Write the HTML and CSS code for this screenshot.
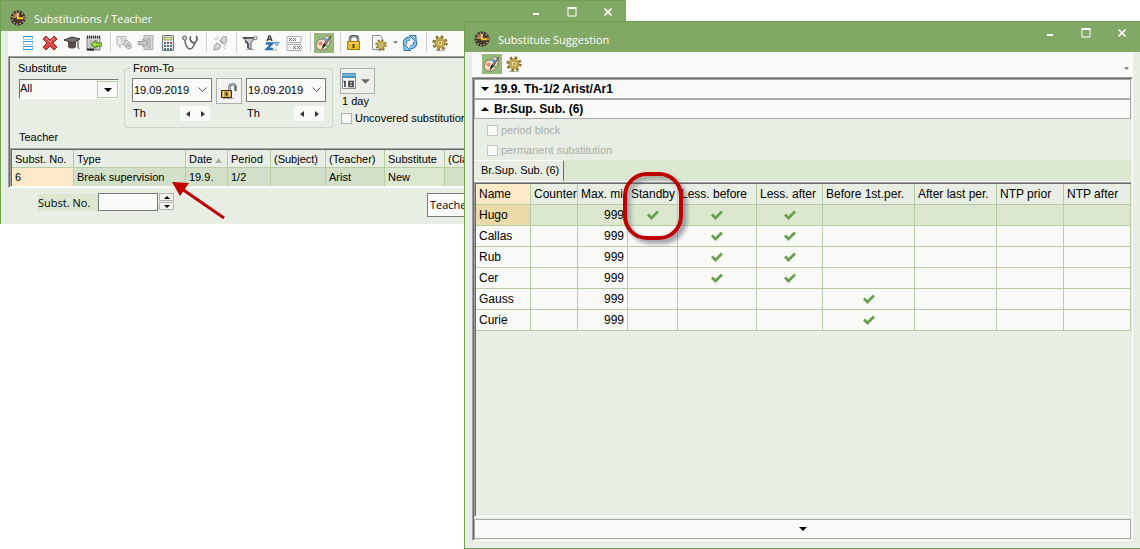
FILE: index.html
```html
<!DOCTYPE html>
<html lang="en">
<head>
    <meta charset="UTF-8">
    <meta name="viewport" content="width=device-width, initial-scale=1.0">
    <title>Substitutions / Teacher</title>
    <link rel="stylesheet" href="styles.css">
</head>
<body>
    <svg class="symbols" aria-hidden="true">
        <symbol id="clock" viewBox="0 0 16 16">
            <circle cx="8" cy="8" r="7.5" fill="#2c2725"/>
            <circle cx="8" cy="8" r="6.2" fill="#4b3a2c" stroke="#c9b69c" stroke-width="1.4" stroke-dasharray="1.4 1.85"/>
            <path d="M3 8a5 5 0 0 1 5-5v5z" fill="#b98752"/>
            <path d="M8 3v5" stroke="#f6e3b4" stroke-width="1.5"/>
            <path d="M7 8.2h6" stroke="#ffc60b" stroke-width="2"/>
        </symbol>
        <symbol id="palette" viewBox="0 0 16 16">
            <path d="M4 4c2 0 2 1 3.500 0C8 1 11 0 13 2c2 2 1 7-1 10-2 3-7 4-10 2-3-2-2-8 2-10z" fill="#f1dfc6" stroke="#8a765f"/>
            <circle cx="4.500" cy="8.500" r="2" fill="#e48080"/>
            <circle cx="9.500" cy="4.500" r="1.700" fill="#6c9fda"/>
            <circle cx="5.500" cy="12" r="1" fill="#f4ece0"/>
            <circle cx="11.500" cy="11" r="1.500" fill="#78b070"/>
            <path d="M15 1L9 11l-3 3 1-4 6-7z" fill="#2b2b2b" stroke="#2b2b2b" stroke-width=".6"/>
            <path d="M13 3l-4 6" stroke="#9ba6b0"/>
        </symbol>
        <symbol id="gear" viewBox="0 0 16 16">
            <path d="M3 15.500h10" stroke="#b5b5b0"/>
            <circle cx="8" cy="8" r="6.300" fill="none" stroke="#8d7128" stroke-width="2.800" stroke-dasharray="2.400 2.550"/>
            <circle cx="8" cy="8" r="5" fill="#d9bf62" stroke="#98792b"/>
            <circle cx="8" cy="8" r="3" fill="#efdf9e" stroke="#a98a38"/>
            <circle cx="8" cy="8" r="1" fill="#8b6914"/>
        </symbol>
        <symbol id="check" viewBox="0 0 12 10">
            <path d="M1 4.500l3.500 3.500L11 1.500" fill="none" stroke="#69a04e" stroke-width="2.800"/>
        </symbol>
        <symbol id="chevron" viewBox="0 0 9 6">
            <path d="M.5 .5l4 4 4-4" fill="none" stroke="#555"/>
        </symbol>
        <symbol id="down" viewBox="0 0 8 4">
            <path d="M0 0h8L4 4z" fill="currentColor"/>
        </symbol>
        <symbol id="padlock-open" viewBox="0 0 16 16">
            <path d="M8.500 8V4c0-3.500 6-3.500 6 0v4" fill="none" stroke="#57666c" stroke-width="2.400"/>
            <path d="M8.500 7V4c0-3 5-3 6-1" fill="none" stroke="#b6cfd4"/>
            <path d="M.5 7.500h10v7H.5z" fill="#c9a74e" stroke="#3c2d0e"/>
            <path d="M2.500 8v6M8.500 8v6" stroke="#f3dfa0"/>
            <path d="M5.500 9.500v3" stroke="#3c2d0e" stroke-width="2"/>
            <path d="M2 15.500h11" stroke="#a9a9a0"/>
        </symbol>
        <symbol id="left" viewBox="0 0 4 6">
            <path d="M4 0v6L0 3z" fill="#333"/>
        </symbol>
        <symbol id="right" viewBox="0 0 4 6">
            <path d="M0 0v6l4-3z" fill="#333"/>
        </symbol>
    </svg>

    <section class="window main-window">
        <header class="titlebar">
            <svg class="icon"><use href="#clock"/></svg>
            <h1>Substitutions / Teacher</h1>
            <div class="window-buttons">
                <button type="button" aria-label="Minimize"><svg viewBox="0 0 10 10"><path d="M2 7h6" stroke="#fff" stroke-width="2"/></svg></button>
                <button type="button" aria-label="Maximize"><svg viewBox="0 0 10 10"><path d="M1 1h8v8H1z" fill="none" stroke="#fff"/><path d="M.5 1h9" stroke="#fff" stroke-width="2"/></svg></button>
                <button type="button" aria-label="Close"><svg viewBox="0 0 10 10"><path d="M1.500 1.500l7 7M8.500 1.500l-7 7" stroke="#fff" stroke-width="1.700"/></svg></button>
            </div>
        </header>

        <div class="toolbar">
            <button type="button" aria-label="List">
                <svg class="icon" viewBox="0 0 16 16"><path d="M3.500 1.500h9v3h-9zM3.500 6.500h9v3h-9zM3.500 11.500h9v3h-9z" fill="#fff" stroke="#9cc9ea"/><path d="M3 1.500h10M3 6.500h10M3 11.500h10M3 14.500h10" stroke="#3c93d2"/></svg>
            </button>
            <button type="button" aria-label="Delete">
                <svg class="icon" viewBox="0 0 16 16"><path d="M1 4l3-3 4 4 4-4 3 3-4 4 4 4-3 3-4-4-4 4-3-3 4-4z" fill="#dc4a48" stroke="#9f2020"/><path d="M4 3l4 4 4-4" fill="none" stroke="#f4a3a0"/></svg>
            </button>
            <button type="button" aria-label="Teacher">
                <svg class="icon" viewBox="0 0 16 16"><path d="M4 7v5c2 2 6 2 8 0V7z" fill="#55504d"/><path d="M0 5l8-3 8 2-7 4z" fill="#777270" stroke="#393634"/><path d="M14 5v7l1 2" fill="none" stroke="#393634"/></svg>
            </button>
            <button type="button" aria-label="Import">
                <svg class="icon" viewBox="0 0 16 16"><path d="M1 2h13v13H1z" fill="#d2d2d2" stroke="#7f7f7f"/><path d="M1 2h13" stroke="#333" stroke-width="3" stroke-dasharray="1 1"/><path d="M3 6h9M3 8h9M3 10h9M3 12h9" stroke="#a5a5a5"/><path d="M1 14.500h7" stroke="#222" stroke-width="2"/><path d="M5 9.500l5-4v2.500h6v3h-6v2.500z" fill="#a5e030" stroke="#3f7d10"/></svg>
            </button>
            <span class="separator"></span>
            <button type="button" aria-label="Assign" disabled>
                <svg class="icon" viewBox="0 0 16 16"><path d="M1 1.500h9v8H5l-1 3-1-3H1z" fill="#ececec" stroke="#b5b5b5"/><path d="M4 4c2-2 4 0 2 2v1" fill="none" stroke="#aaa"/><path d="M8 6l3-1 4 4v4l-3 1-4-4z" fill="#d8d8d8" stroke="#aaa"/><path d="M11 8v4M13 9v3" stroke="#999"/></svg>
            </button>
            <button type="button" aria-label="Enter" disabled>
                <svg class="icon" viewBox="0 0 16 16"><path d="M6 .5h9v14H6z" fill="#d5d5d5" stroke="#aeaeae"/><path d="M8 2.500h5v11H8z" fill="#bebebe"/><path d="M0 6.500h5V4l5 4-5 4V9.500H0z" fill="#c9c9c9" stroke="#999"/></svg>
            </button>
            <button type="button" aria-label="Calculator">
                <svg class="icon" viewBox="0 0 16 16"><path d="M2.500 .5h11v15h-11z" fill="#f4f4f4" stroke="#767676"/><path d="M4 2h8v3H4z" fill="#d4e39a" stroke="#7c8a54" stroke-width=".7"/><path d="M5 7v2M5 10v2M5 13v2" stroke="#456aa4" stroke-width="2"/><path d="M8 7v2M8 10v2M8 13v2" stroke="#666" stroke-width="2"/><path d="M11 7v2" stroke="#c8383a" stroke-width="2"/><path d="M11 10v2M11 13v2" stroke="#3d7499" stroke-width="2"/></svg>
            </button>
            <button type="button" aria-label="Diagnosis">
                <svg class="icon" viewBox="0 0 16 16"><circle cx="2.500" cy="3" r="2" fill="#ddd" stroke="#555"/><path d="M3 5c0 4 2 9 5 9s4-4 5-6" fill="none" stroke="#62666a" stroke-width="1.500"/><path d="M9 1.500c-2 2 0 6 3 6.500 3-1 4-5 2-7" fill="none" stroke="#4a4e52" stroke-width="1.500"/></svg>
            </button>
            <span class="separator"></span>
            <button type="button" aria-label="Disconnect" disabled>
                <svg class="icon" viewBox="0 0 16 16"><path d="M9 4l3-3 3 3-1 4-3 1-3-3zM2 11l3-3 4 3-2 3-4 1z" fill="#d6d6d6" stroke="#a0a0a0"/><path d="M13 3l2-2M1 15l2-2M5 8l2 2M8 5l3 3" stroke="#8f8f8f"/><path d="M2 3l3 2M5 1l1 3M11 12l3 2M12 10l3 1" stroke="#b8b8b8"/></svg>
            </button>
            <span class="separator"></span>
            <button type="button" aria-label="Filter">
                <svg class="icon" viewBox="0 0 16 16"><path d="M1 2.500h12L9 8v6l-3-1V8z" fill="#c8ccd0" stroke="#5d6267"/><path d="M1 3h11M3 6l3 3v4" fill="none" stroke="#444" stroke-width="1.500"/><circle cx="13.500" cy="3" r="1.700" fill="#fff" stroke="#777"/><path d="M4 14.500h8" stroke="#9b9b9b"/></svg>
            </button>
            <button type="button" aria-label="Sort">
                <svg class="icon" viewBox="0 0 16 16"><path d="M3 6l2-5h1l2 5M4 4.500h3" fill="none" stroke="#444" stroke-width="1.500"/><path d="M2 8.500h6L3 14h6" fill="none" stroke="#2275b5" stroke-width="2.400"/><path d="M10.500 7.500h4.500L12.500 11z" fill="#d4effb" stroke="#3492c6"/><path d="M8 15h5" stroke="#9b9b9b"/></svg>
            </button>
            <button type="button" aria-label="Columns">
                <svg class="icon" viewBox="0 0 16 16"><path d="M1 1.500h14v6H1zM1 9.500h14v6H1z" fill="#fff" stroke="#aaa"/><path d="M3 3l3 3M6 3l-3 3M7 3l3 3M10 3l-3 3M7 11l3 3M10 11l-3 3M11 11l3 3M14 11l-3 3" stroke="#555" stroke-width=".9"/></svg>
            </button>
            <span class="separator"></span>
            <button type="button" class="pressed" aria-label="Colours"><svg class="icon"><use href="#palette"/></svg></button>
            <span class="separator"></span>
            <button type="button" aria-label="Lock">
                <svg class="icon" viewBox="0 0 16 16"><path d="M4 8V4c0-4 8-4 8 0v4" fill="none" stroke="#50585c" stroke-width="2.500"/><path d="M4 7V4c0-3 8-3 8 0v3" fill="none" stroke="#bcc6ca"/><path d="M1.500 6.500h12v8h-12z" fill="#f1bc26" stroke="#a57506"/><path d="M3 8h9" stroke="#ffe78a"/><path d="M7.500 9v4" stroke="#604400" stroke-width="2"/></svg>
            </button>
            <button type="button" class="split" aria-label="Page settings">
                <svg class="icon" viewBox="0 0 16 16"><path d="M1.500 .5h8l2 3v11h-10z" fill="#f7f7f7" stroke="#8e8e8e"/></svg>
                <svg class="mini-gear"><use href="#gear"/></svg>
                <svg class="caret"><use href="#down"/></svg>
            </button>
            <button type="button" aria-label="Refresh">
                <svg class="icon" viewBox="0 0 16 16"><path d="M3.500 10C1.500 6 4.500 3.500 8 3.500M12.500 6c2 4-1 6.500-4.500 6.500" fill="none" stroke="#2f6fa9" stroke-width="4"/><path d="M7.500 .5H14V7z" fill="#8fcaf0" stroke="#2f6fa9"/><path d="M8.500 15.500H2V9z" fill="#8fcaf0" stroke="#2f6fa9"/><path d="M3.500 10C1.500 6 4.500 3.500 9 3.500M12.500 6c2 4-1 6.500-5.500 6.500" fill="none" stroke="#8fcaf0" stroke-width="2"/></svg>
            </button>
            <span class="separator"></span>
            <button type="button" aria-label="Settings"><svg class="icon"><use href="#gear"/></svg></button>
        </div>

        <div class="panel">
            <form class="filters">
                <div class="element">
                    <label for="substitute">Substitute</label>
                    <span class="select-box">
                        <select id="substitute"><option>All</option></select>
                        <span class="select-arrow"><svg class="caret"><use href="#down"/></svg></span>
                    </span>
                </div>
                <fieldset class="range">
                    <legend>From-To</legend>
                    <div class="day">
                        <span class="date-box">
                            <input type="text" value="19.09.2019" aria-label="From">
                            <button type="button" aria-label="Open calendar"><svg><use href="#chevron"/></svg></button>
                        </span>
                        <div class="weekday">
                            <span>Th</span>
                            <span class="stepper"><button type="button" aria-label="Day back"><svg><use href="#left"/></svg></button><button type="button" aria-label="Day forward"><svg><use href="#right"/></svg></button></span>
                        </div>
                    </div>
                    <button type="button" class="lock-button" aria-label="Unlock range"><svg class="icon"><use href="#padlock-open"/></svg></button>
                    <div class="day">
                        <span class="date-box">
                            <input type="text" value="19.09.2019" aria-label="To">
                            <button type="button" aria-label="Open calendar"><svg><use href="#chevron"/></svg></button>
                        </span>
                        <div class="weekday">
                            <span>Th</span>
                            <span class="stepper"><button type="button" aria-label="Day back"><svg><use href="#left"/></svg></button><button type="button" aria-label="Day forward"><svg><use href="#right"/></svg></button></span>
                        </div>
                    </div>
                </fieldset>
                <div class="period">
                    <button type="button" class="calendar-button" aria-label="Calendar">
                        <svg class="icon" viewBox="0 0 16 16"><path d="M1.500 1.500h13v14h-13z" fill="#f6f6f6" stroke="#888"/><path d="M1 0h14v5H1z" fill="#4a95c0"/><path d="M1 2h14" stroke="#a5d2e7"/><path d="M4 8v6M2.500 8.500H4M8 8.500h4v5H8zM8 11h4" fill="none" stroke="#444" stroke-width="1.700"/></svg>
                        <svg class="caret"><use href="#down"/></svg>
                    </button>
                    <span>1 day</span>
                    <label class="check-line"><input type="checkbox"> Uncovered substitution</label>
                </div>
            </form>
            <h2>Teacher</h2>
            <div class="grid-frame">
                <table class="substitutions">
                    <colgroup>
                        <col class="col-no"><col class="col-type"><col class="col-date"><col class="col-period"><col class="col-subject"><col class="col-teacher"><col class="col-substitute"><col>
                    </colgroup>
                    <thead>
                        <tr><th>Subst. No.</th><th>Type</th><th>Date <svg class="sort" viewBox="0 0 7 5"><path d="M0 5h7L3.500 0z" fill="#9fb3a0"/></svg></th><th>Period</th><th>(Subject)</th><th>(Teacher)</th><th>Substitute</th><th>(Class)</th></tr>
                    </thead>
                    <tbody>
                        <tr><td class="number">6</td><td>Break supervision</td><td>19.9.</td><td>1/2</td><td></td><td>Arist</td><td class="new">New</td><td></td></tr>
                    </tbody>
                </table>
            </div>
        </div>

        <footer class="record-bar">
            <label for="subst-no">Subst. No.</label>
            <input type="text" id="subst-no">
            <span class="spinner">
                <button type="button" aria-label="Next"><svg viewBox="0 0 8 4"><path d="M0 4h8L4 0z"/></svg></button>
                <button type="button" aria-label="Previous"><svg viewBox="0 0 8 4"><path d="M0 0h8L4 4z"/></svg></button>
            </span>
            <button type="button" class="teacher-button">Teacher</button>
        </footer>

        <svg class="pointer" viewBox="0 0 54 40" aria-hidden="true">
            <path d="M10 9l42 29" stroke="#c00000" stroke-width="3"/>
            <path d="M0 2l17 1-9 13z" fill="#c00000"/>
        </svg>
    </section>

    <section class="window suggestion-window">
        <header class="titlebar">
            <svg class="icon"><use href="#clock"/></svg>
            <h1>Substitute Suggestion</h1>
            <div class="window-buttons">
                <button type="button" aria-label="Minimize"><svg viewBox="0 0 10 10"><path d="M2 7h6" stroke="#fff" stroke-width="2"/></svg></button>
                <button type="button" aria-label="Maximize"><svg viewBox="0 0 10 10"><path d="M1 1h8v8H1z" fill="none" stroke="#fff"/><path d="M.5 1h9" stroke="#fff" stroke-width="2"/></svg></button>
                <button type="button" aria-label="Close"><svg viewBox="0 0 10 10"><path d="M1.500 1.500l7 7M8.500 1.500l-7 7" stroke="#fff" stroke-width="1.700"/></svg></button>
            </div>
        </header>

        <div class="toolbar">
            <button type="button" class="pressed" aria-label="Colours"><svg class="icon"><use href="#palette"/></svg></button>
            <button type="button" aria-label="Settings"><svg class="icon"><use href="#gear"/></svg></button>
            <button type="button" class="overflow" aria-label="More"><svg class="caret"><use href="#down"/></svg></button>
        </div>

        <div class="panel">
            <button type="button" class="section-bar"><svg viewBox="0 0 8 4"><path d="M0 0h8L4 4z"/></svg>19.9. Th-1/2 Arist/Ar1</button>
            <button type="button" class="section-bar"><svg viewBox="0 0 8 4"><path d="M0 4h8L4 0z"/></svg>Br.Sup. Sub. (6)</button>
            <div class="options">
                <label class="check-line"><input type="checkbox" disabled> period block</label>
                <label class="check-line"><input type="checkbox" disabled> permanent substitution</label>
            </div>
            <div class="tabs">
                <button type="button" class="tab">Br.Sup. Sub. (6)</button>
            </div>
            <div class="grid-frame">
                <table class="suggestions">
                    <colgroup>
                        <col class="col-name"><col class="col-counter"><col class="col-short"><col class="col-short"><col class="col-before"><col class="col-after"><col class="col-first"><col class="col-last"><col class="col-prior"><col>
                    </colgroup>
                    <thead>
                        <tr><th>Name</th><th>Counter</th><th>Max. mi</th><th>Standby</th><th>Less. before</th><th>Less. after</th><th>Before 1st.per.</th><th>After last per.</th><th>NTP prior</th><th>NTP after</th></tr>
                    </thead>
                    <tbody>
                        <tr class="selected"><td>Hugo</td><td></td><td class="minutes">999</td><td class="mark"><svg><use href="#check"/></svg></td><td class="mark"><svg><use href="#check"/></svg></td><td class="mark"><svg><use href="#check"/></svg></td><td></td><td></td><td></td><td></td></tr>
                        <tr><td>Callas</td><td></td><td class="minutes">999</td><td></td><td class="mark"><svg><use href="#check"/></svg></td><td class="mark"><svg><use href="#check"/></svg></td><td></td><td></td><td></td><td></td></tr>
                        <tr><td>Rub</td><td></td><td class="minutes">999</td><td></td><td class="mark"><svg><use href="#check"/></svg></td><td class="mark"><svg><use href="#check"/></svg></td><td></td><td></td><td></td><td></td></tr>
                        <tr><td>Cer</td><td></td><td class="minutes">999</td><td></td><td class="mark"><svg><use href="#check"/></svg></td><td class="mark"><svg><use href="#check"/></svg></td><td></td><td></td><td></td><td></td></tr>
                        <tr><td>Gauss</td><td></td><td class="minutes">999</td><td></td><td></td><td></td><td class="mark"><svg><use href="#check"/></svg></td><td></td><td></td><td></td></tr>
                        <tr><td>Curie</td><td></td><td class="minutes">999</td><td></td><td></td><td></td><td class="mark"><svg><use href="#check"/></svg></td><td></td><td></td><td></td></tr>
                    </tbody>
                </table>
                <div class="highlight"></div>
            </div>
            <button type="button" class="expand-bar" aria-label="Expand"><svg viewBox="0 0 8 4"><path d="M0 0h8L4 4z"/></svg></button>
        </div>
    </section>
</body>
</html>
```
FILE: styles.css
```css
* {
    box-sizing: border-box;
}

body {
    margin: 0;
    min-height: 100vh;
    position: relative;
    background-color: #fff;
    color: #000;
    font-family: "Liberation Sans", Arial, sans-serif;
    font-size: 11px;
    line-height: 14px;
}

button, input, select {
    margin: 0;
    padding: 0;
    font: inherit;
    color: inherit;
}

button {
    border: none;
    background: none;
}

svg {
    display: block;
    flex: none;
}

.symbols {
    position: absolute;
    width: 0;
    height: 0;
}

.icon {
    width: 16px;
    height: 16px;
}

.caret {
    width: 5px;
    height: 3px;
    color: #6b6b6b;
}

/* windows */
.window {
    position: absolute;
    display: flex;
    flex-direction: column;
    border: 1px solid #6ea14d;
    background-color: #e8eee3;
}

.main-window {
    top: 0;
    left: 0;
    width: 626px;
    border-right: none;
    border-bottom: none;
}

.suggestion-window {
    top: 21px;
    left: 464px;
    right: 0;
    bottom: 0;
    border-right: none;
    padding-bottom: 7px;
}

.titlebar {
    display: flex;
    align-items: center;
    gap: 8px;
    height: 30px;
    padding: 4px 9px 0;
    background-color: #82a866;
}

.titlebar h1 {
    flex: 1;
    margin: 0;
    padding-top: 2px;
    color: #fff;
    font-family: "Open Sans", "Noto Sans", sans-serif;
    font-size: 11px;
    font-weight: 400;
}

.window-buttons {
    display: flex;
    align-self: flex-start;
    gap: 26px;
    padding-right: 4px;
}

.window-buttons svg {
    width: 10px;
    height: 10px;
    margin-top: 2px;
}

/* toolbars */
.toolbar {
    display: flex;
    align-items: center;
    gap: 2px;
    height: 25px;
    margin-left: 7px;
    padding: 0 0 2px 10px;
    background-color: #fafaf9;
}

.toolbar button {
    display: flex;
    align-items: center;
    justify-content: center;
    width: 20px;
    height: 20px;
}

.toolbar .pressed {
    background-color: #96b97c;
}

.toolbar .split {
    position: relative;
    width: 32px;
    justify-content: space-between;
    padding: 0 0 0 5px;
}

.mini-gear {
    position: absolute;
    left: 9px;
    top: 6px;
    width: 12px;
    height: 12px;
}

.separator {
    width: 1px;
    height: 21px;
    margin: 0 1px 0 4px;
    background-color: #d2d2d2;
}

.suggestion-window .toolbar {
    margin-right: 7px;
}

.toolbar .overflow {
    width: 13px;
    margin-left: auto;
    padding-top: 10px;
}

.panel {
    margin-left: 7px;
    border-top: 1px solid #a0a0a0;
    border-left: 1px solid #a0a0a0;
    border-bottom: 1px solid #fff;
    box-shadow: inset 1px 1px #696969;
    padding: 1px 0 0 1px;
}

.grid-frame {
    border: 1px solid #a0a0a0;
    border-right: none;
    border-bottom: 1px solid #fff;
    box-shadow: inset 1px 1px #696969;
    padding: 1px 0 0 1px;
}

/* filter area */
.filters {
    display: flex;
    padding-top: 3px;
}

.element {
    width: 110px;
    margin-right: 4px;
}

.element label {
    display: block;
    margin-left: 8px;
}

.select-box {
    display: flex;
    position: relative;
    width: 100px;
    height: 20px;
    margin: 4px 0 0 9px;
    border: 1px solid #fff;
    border-top-color: #777;
    border-left-color: #777;
    background-color: #fafaf9;
}

.select-box select {
    width: 100%;
    border: none;
    background: none;
    appearance: none;
    padding-bottom: 3px;
}

.select-arrow {
    position: absolute;
    top: 1px;
    right: 0;
    bottom: 0;
    width: 21px;
    display: flex;
    align-items: center;
    justify-content: center;
    border: 1px solid #b5cda3;
    background-color: #fafaf9;
    pointer-events: none;
}

.select-arrow .caret {
    width: 8px;
    height: 4px;
    color: #000;
}

.range {
    display: flex;
    gap: 4px;
    width: 209px;
    height: 67px;
    margin: 0;
    padding: 3px 6px 0 7px;
    border: 1px solid #cfd4ca;
    border-radius: 3px;
}

.range legend {
    margin-left: -1px;
    padding: 0 2px;
}

.day {
    width: 80px;
}

.date-box {
    display: flex;
    align-items: center;
    height: 24px;
    border: 1px solid #7a7a7a;
    background-color: #fafaf9;
}

.date-box input {
    flex: 1;
    min-width: 0;
    border: none;
    background: none;
    padding-left: 1px;
}

.date-box button {
    width: 13px;
}

.date-box svg {
    width: 9px;
    height: 6px;
}

.weekday {
    display: flex;
    justify-content: space-between;
    padding: 4px 2px 0 1px;
}

.stepper {
    display: flex;
    width: 30px;
    height: 15px;
    background-color: #fafaf9;
}

.stepper button {
    display: flex;
    flex: 1;
    align-items: center;
    justify-content: center;
}

.stepper svg {
    width: 4px;
    height: 6px;
}

.lock-button, .calendar-button {
    display: flex;
    align-items: center;
    justify-content: center;
    width: 26px;
    height: 26px;
    border: 1px solid #adadad;
    background-color: #f3f4f1;
}

.period {
    padding: 7px 0 0 7px;
}

.period span {
    display: block;
    padding-left: 2px;
}

.calendar-button {
    width: 35px;
    gap: 4px;
    padding-right: 4px;
    background-color: #eef1ea;
}

.calendar-button .caret {
    width: 9px;
    height: 5px;
}

.check-line {
    display: flex;
    align-items: center;
    gap: 3px;
    white-space: nowrap;
}

.period .check-line {
    margin: 3px 0 0 1px;
}

.check-line input {
    appearance: none;
    width: 11px;
    height: 11px;
    border: 1px solid #b0b0b0;
    background-color: #fafaf9;
}

h2 {
    margin: 2px 0 4px 9px;
    font-size: 11px;
    font-weight: 400;
}

/* tables */
table {
    width: 100%;
    border-collapse: separate;
    border-spacing: 0;
    table-layout: fixed;
}

th, td {
    overflow: hidden;
    padding: 0 0 0 3px;
    border-right: 1px solid #b5cda3;
    border-bottom: 1px solid #b5cda3;
    font-weight: 400;
    text-align: left;
    white-space: nowrap;
}

.substitutions th, .substitutions td {
    height: 18px;
}

.substitutions td {
    border-bottom: none;
    background-color: #d3e0c9;
}

.substitutions .number {
    background-color: #feeac6;
}

.substitutions .new {
    background-color: #dbe8cf;
}

.sort {
    display: inline-block;
    width: 7px;
    height: 5px;
}

.col-no { width: 62px; }
.col-type { width: 112px; }
.col-date { width: 42px; }
.col-period { width: 43px; }
.col-subject { width: 55px; }
.col-teacher { width: 59px; }
.col-substitute { width: 60px; }

.record-bar {
    display: flex;
    align-items: flex-start;
    height: 36px;
    padding: 5px 0 0 37px;
    font-family: "Open Sans", "Noto Sans", sans-serif;
}

.record-bar label {
    width: 60px;
    margin-top: 1px;
    line-height: 17px;
    background-color: #dbe8cf;
}

.record-bar input {
    width: 60px;
    height: 18px;
    border: 1px solid #7a7a7a;
    background-color: #fafaf9;
}

.spinner {
    display: flex;
    flex-direction: column;
    gap: 1px;
    margin-left: 1px;
}

.spinner button {
    display: flex;
    align-items: center;
    justify-content: center;
    width: 15px;
    height: 8px;
    border: 1px solid #b4b4b4;
    background-color: #f3f4f1;
}

.spinner svg {
    width: 6px;
    height: 3px;
}

.teacher-button {
    height: 24px;
    margin-left: 253px;
    padding: 0 2px;
    border: 1px solid #7a7a7a;
    background-color: #fafaf9;
}

.pointer {
    position: absolute;
    left: 171px;
    top: 179px;
    width: 54px;
    height: 40px;
}

/* suggestion window */
.suggestion-window .panel {
    display: flex;
    flex: 1;
    flex-direction: column;
    margin-right: 7px;
    padding-right: 1px;
    border-right: 1px solid #fff;
}

.section-bar {
    display: flex;
    align-items: center;
    gap: 5px;
    height: 20px;
    padding-left: 6px;
    border: 1px solid #a9a9a9;
    background-color: #fafaf9;
    font-size: 12px;
    font-weight: 700;
}

.section-bar svg, .expand-bar svg {
    width: 8px;
    height: 4px;
}

.options {
    display: flex;
    flex-direction: column;
    gap: 6px;
    padding: 4px 0 3px 13px;
    color: #a9aca5;
}

.options input {
    border-color: #c4c8c0;
}

.tabs {
    display: flex;
    height: 22px;
    border-bottom: 1px solid #fff;
    background-color: #dbe8cf;
}

.tab {
    padding: 0 4px 2px 7px;
    border-top: 1px solid #fff;
    border-right: 1px solid #696969;
    background-color: #e8eee3;
}

.suggestion-window .grid-frame {
    position: relative;
    flex: 1;
}

.suggestions {
    font-size: 12px;
}

.suggestions th, .suggestions td {
    height: 21px;
}

.suggestions td {
    background-color: #fafaf9;
}

.suggestions th:first-child {
    background-color: #feeac6;
}

.suggestions .selected td {
    background-color: #dbe8cf;
}

.suggestions .selected td:first-child {
    background-color: #ebdba8;
}

.suggestions .minutes {
    padding-right: 3px;
    text-align: right;
}

.suggestions .mark {
    padding: 0;
}

.mark svg {
    width: 12px;
    height: 10px;
    margin: 0 auto;
}

.col-name { width: 55px; }
.col-counter { width: 47px; }
.col-short { width: 50px; }
.col-before { width: 79px; }
.col-after { width: 66px; }
.col-first { width: 92px; }
.col-last { width: 82px; }
.col-prior { width: 67px; }

.highlight {
    position: absolute;
    left: 148px;
    top: -11px;
    width: 60px;
    height: 68px;
    border: 4px solid #be0000;
    border-radius: 24px;
    box-shadow: 4px 4px 4px rgba(80, 80, 100, 0.5), inset 4px 4px 4px rgba(80, 80, 100, 0.4);
}

.expand-bar {
    display: flex;
    align-items: center;
    justify-content: center;
    height: 20px;
    margin: 2px 0 1px;
    border: 1px solid #a9a9a9;
    background-color: #fafaf9;
}
```
